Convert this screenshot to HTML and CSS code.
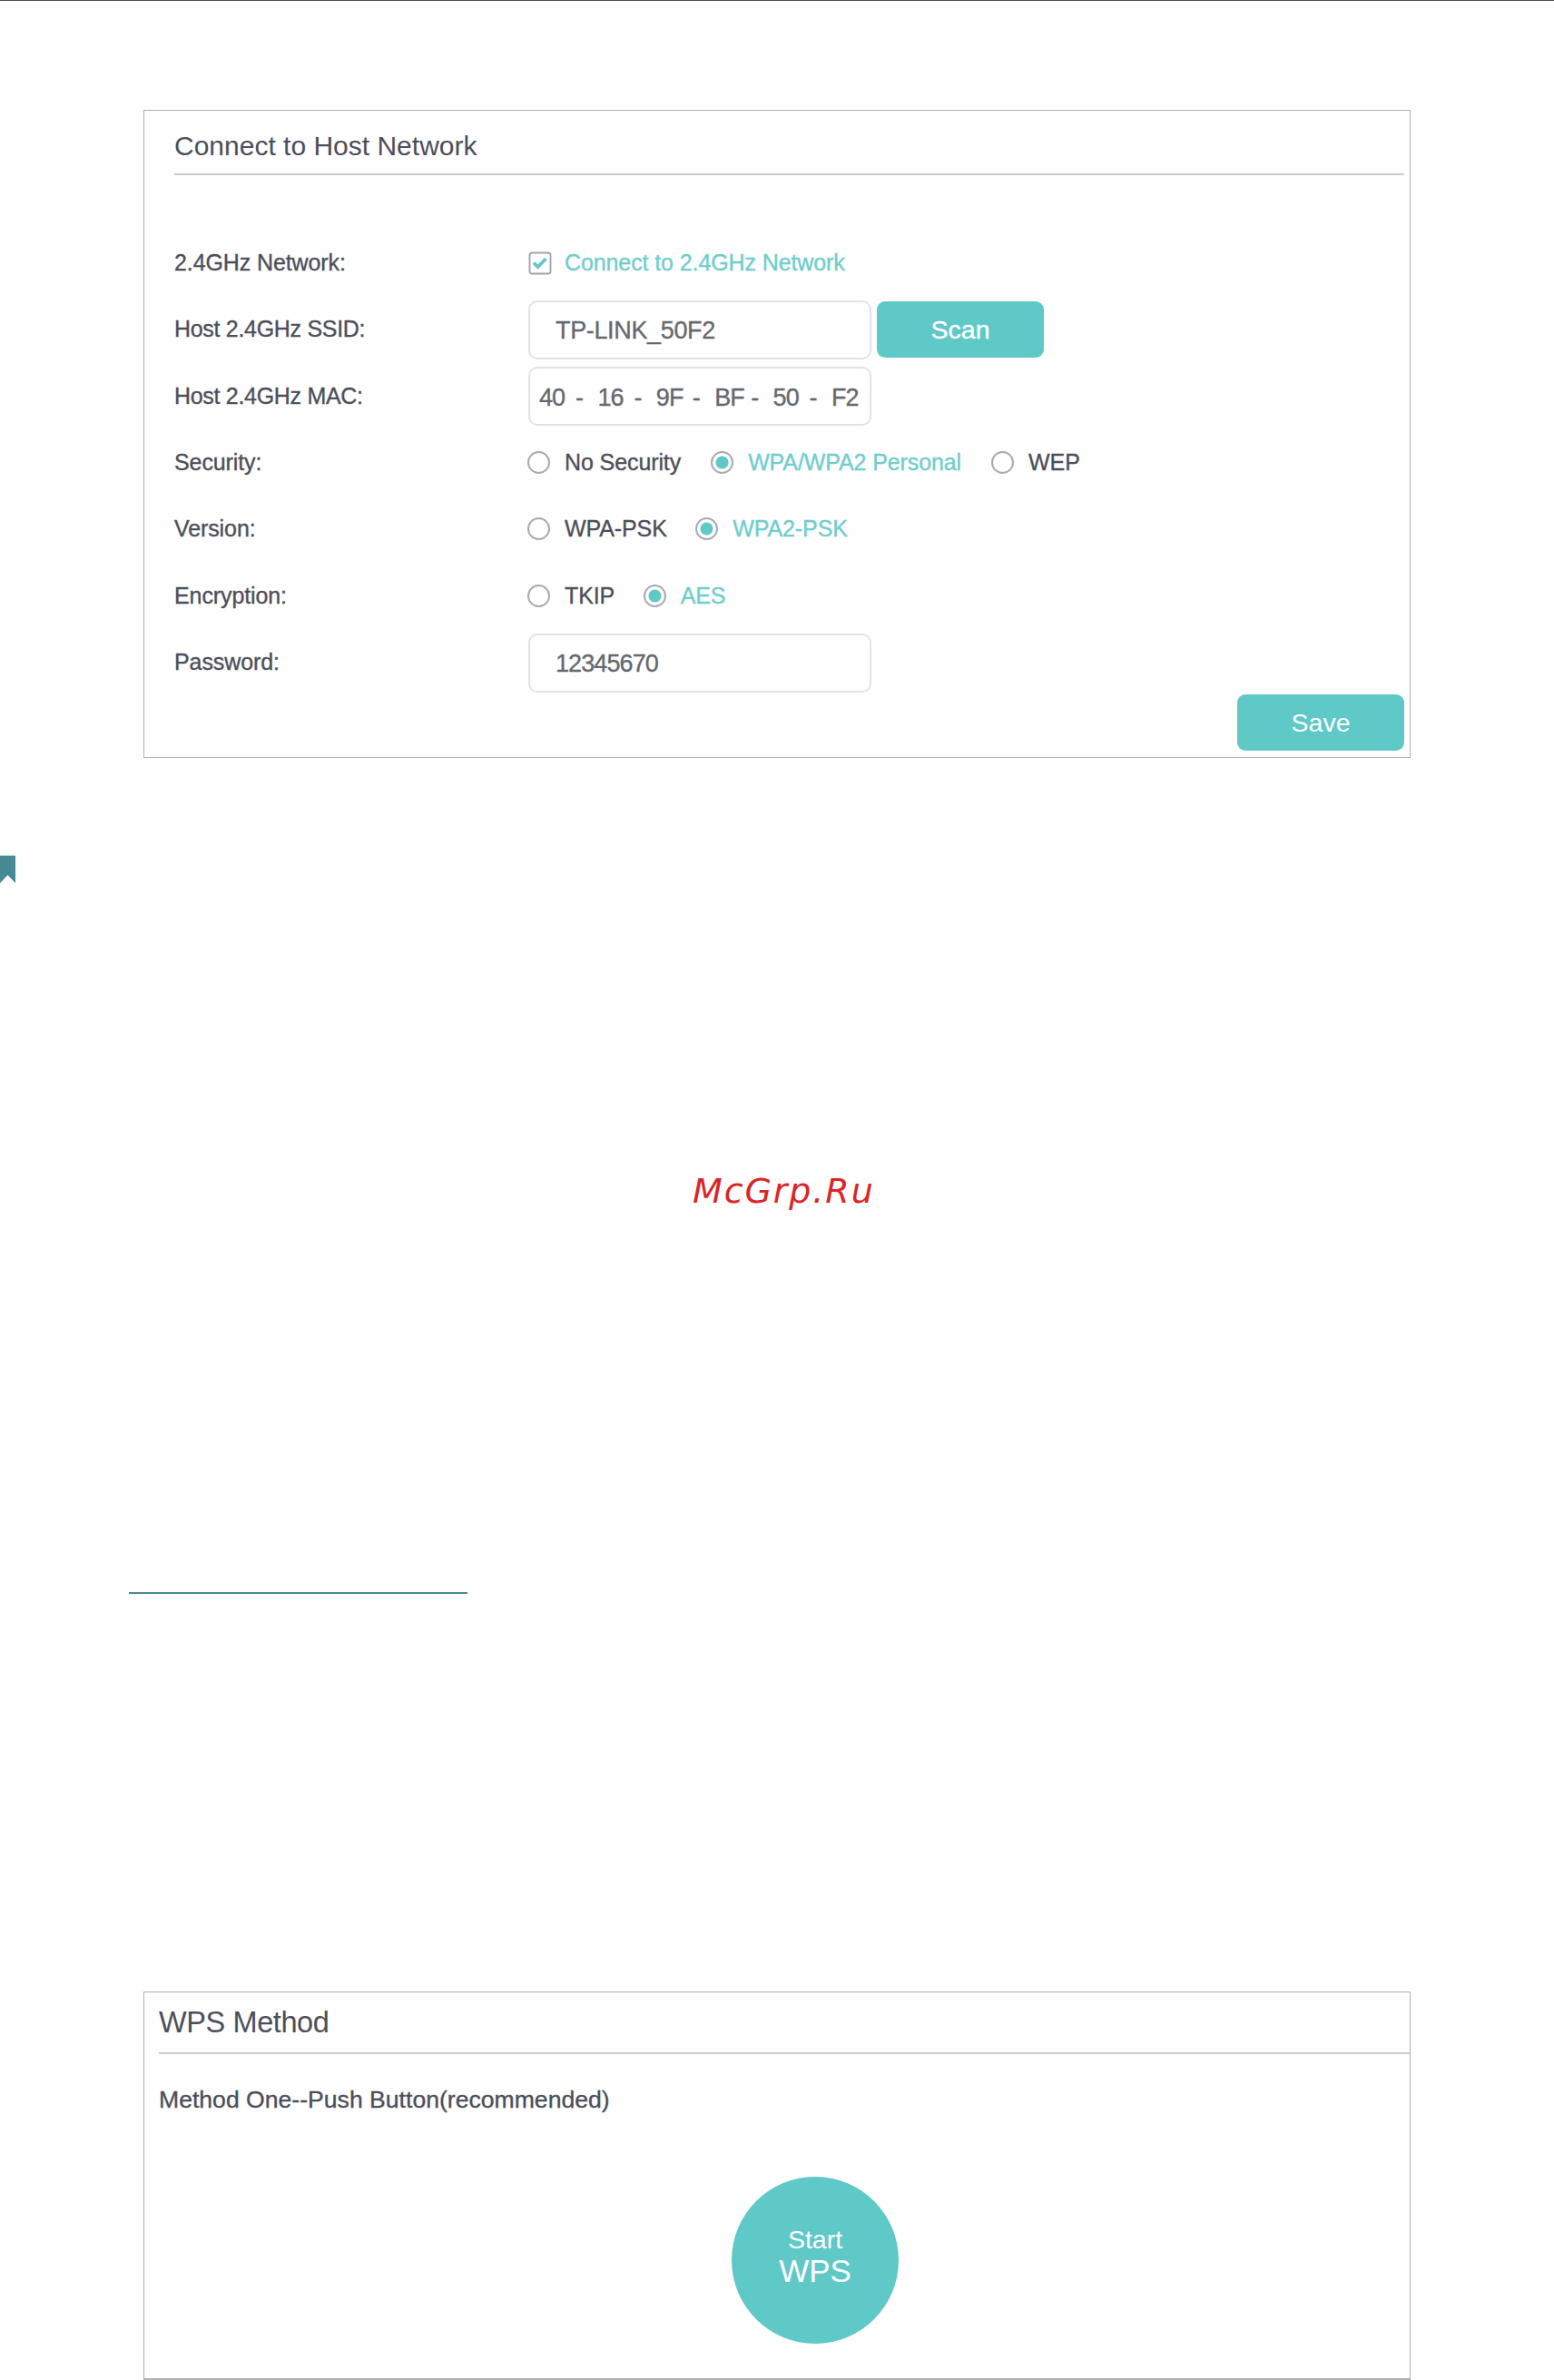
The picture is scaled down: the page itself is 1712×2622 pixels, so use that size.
FILE: index.html
```html
<!DOCTYPE html>
<html lang="en">
<head>
  <meta charset="UTF-8">
  <meta name="viewport" content="width=device-width, initial-scale=1.0">
  <title>Connect to Host Network</title>
  <link rel="stylesheet" href="styles.css">
</head>
<body>

  <!-- Host network form -->
  <div class="panel host-panel">
    <h1>Connect to Host Network</h1>

    <div class="form-row">
      <span class="label">2.4GHz Network:</span>
      <label class="option checked connect">
        <svg class="checkbox" viewBox="0 0 26 26">
          <rect x="1.5" y="1.5" width="23" height="23" rx="2.5" fill="#fff" stroke="#a0a2a8" stroke-width="1.8"/>
          <path d="M6 12.5l4.5 4.5 9-9" fill="none" stroke="#5fc9c8" stroke-width="3.8"/>
        </svg>
        Connect to 2.4GHz Network
      </label>
    </div>

    <div class="form-row">
      <label class="label ssid" for="ssid">Host 2.4GHz SSID:</label>
      <input class="field" type="text" id="ssid" value="TP-LINK_50F2">
      <button class="btn scan">Scan</button>
    </div>

    <div class="form-row">
      <span class="label ssid">Host 2.4GHz MAC:</span>
      <div class="field mac">
        <span>40</span><i>-</i><span>16</span><i>-</i><span>9F</span><i>-</i><span>BF</span><i>-</i><span>50</span><i>-</i><span>F2</span>
      </div>
    </div>

    <div class="form-row">
      <span class="label">Security:</span>
      <label class="option"><input type="radio" name="security">No Security</label>
      <label class="option checked"><input type="radio" name="security" checked>WPA/WPA2 Personal</label>
      <label class="option"><input type="radio" name="security">WEP</label>
    </div>

    <div class="form-row">
      <span class="label">Version:</span>
      <label class="option psk"><input type="radio" name="version">WPA-PSK</label>
      <label class="option checked"><input type="radio" name="version" checked>WPA2-PSK</label>
    </div>

    <div class="form-row">
      <span class="label">Encryption:</span>
      <label class="option psk"><input type="radio" name="encryption">TKIP</label>
      <label class="option checked"><input type="radio" name="encryption" checked>AES</label>
    </div>

    <div class="form-row">
      <label class="label" for="password">Password:</label>
      <input class="field password" type="text" id="password" value="12345670">
    </div>

    <button class="btn save">Save</button>
  </div>

  <svg class="bookmark" viewBox="0 0 17 32">
    <path d="M0 0h17v31l-8.500-9L0 31z" fill="#478a94"/>
    <path d="M0 0h17v1H0z" fill="#b5d0d4"/>
  </svg>

  <div class="watermark">McGrp.Ru</div>

  <div class="link-line"></div>

  <!-- WPS -->
  <div class="panel wps-panel">
    <h2>WPS Method</h2>
    <p>Method One--Push Button(recommended)</p>
    <button class="wps-btn"><span>Start</span>WPS</button>
  </div>

</body>
</html>
```
FILE: styles.css
```css
* {
  box-sizing: border-box;
}
body {
  margin: 0;
  width: 1712px;
  height: 2622px;
  overflow: hidden;
  display: flex;
  flex-direction: column;
  border-top: 1px solid #4d4d4d;
  background-color: #fefefe;
  font-family: "Liberation Sans", Arial, sans-serif;
  font-size: 25px;
  color: #4c4f5a;
}
.panel {
  width: 1396px;
  margin-left: 158px;
  border: 1px solid #b0b0b0;
  background-color: #fefefe;
  flex: none;
}
h1, h2, p {
  margin: 0;
  font-weight: normal;
}
.host-panel {
  height: 714px;
  margin-top: 120px;
  padding: 20px 6px 0 33px;
  display: flex;
  flex-direction: column;
}
.host-panel h1 {
  font-size: 30px;
  line-height: 38px;
  padding-bottom: 11px;
  border-bottom: 2px solid #cbcdcd;
  margin-bottom: 60px;
}
.form-row {
  display: flex;
  align-items: center;
  height: 73.33px;
  flex: none;
  -webkit-text-stroke: 0.35px;
}
.label {
  width: 390px;
  letter-spacing: -0.1px;
}
.ssid {
  letter-spacing: -0.3px;
}
.option {
  display: flex;
  align-items: center;
  margin-right: 34px;
  letter-spacing: -0.1px;
}
.psk {
  margin-right: 32.500px;
}
.checked {
  color: #6fcdcc;
}
.checkbox {
  width: 26px;
  height: 26px;
  margin: 0 14px 0 0;
}
.option input {
  appearance: none;
  width: 25px;
  height: 25px;
  margin: 0 16px 0 -1px;
  border: 2px solid #a8aaaf;
  border-radius: 50%;
  background-color: #fff;
}
.option input:checked {
  background: radial-gradient(circle, #5fc9c8 6.500px, #fff 7.500px);
}
.field {
  width: 378px;
  height: 65px;
  padding: 2px 0 0 28px;
  border: 2px solid #e3e3e3;
  border-radius: 10px;
  background-color: #fff;
  font-family: inherit;
  font-size: 27px;
  letter-spacing: -0.35px;
  color: #66686f;
  -webkit-text-stroke: 0.35px;
  position: relative;
  top: 0.5px;
}
.password {
  letter-spacing: -0.9px;
}
.mac {
  display: flex;
  align-items: center;
  padding: 3px 0 0 10px;
  letter-spacing: -0.9px;
}
.mac span {
  width: 40px;
}
.mac i {
  width: 24.4px;
  font-style: normal;
}
.btn {
  width: 184px;
  height: 62px;
  padding: 1px 0 0;
  border: none;
  border-radius: 9px;
  background-color: #5fc9c8;
  color: #fff;
  font-family: inherit;
  font-size: 28.5px;
}
.scan {
  margin-left: 6px;
}
.save {
  align-self: flex-end;
  margin-top: -1px;
}
.bookmark {
  width: 17px;
  height: 32px;
  margin-top: 107px;
  flex: none;
}
.watermark {
  margin: 314px 0 0 763px;
  font-family: "DejaVu Sans", sans-serif;
  font-style: italic;
  font-size: 38px;
  line-height: 48px;
  letter-spacing: 1.9px;
  color: #d92626;
}
.link-line {
  width: 373px;
  height: 2px;
  margin: 418px 0 0 142px;
  background-color: #478a94;
  flex: none;
}
.wps-panel {
  height: 428px;
  margin-top: 438px;
  padding: 13px 0 0 16px;
  border-bottom-width: 2px;
}
.wps-panel h2 {
  font-size: 32.500px;
  line-height: 40px;
  letter-spacing: -0.4px;
  padding-bottom: 13px;
  border-bottom: 2px solid #cbcbcb;
}
.wps-panel p {
  font-size: 26.600px;
  line-height: 30px;
  margin-top: 35px;
  -webkit-text-stroke: 0.35px;
}
.wps-btn {
  display: flex;
  flex-direction: column;
  align-items: center;
  width: 184px;
  height: 184px;
  margin: 70px 0 0 631px;
  padding: 53px 0 0;
  border: none;
  border-radius: 50%;
  background-color: #5fc9c8;
  color: #fff;
  font-family: inherit;
  font-size: 35px;
  line-height: 38px;
}
.wps-btn span {
  font-size: 28.500px;
  line-height: 32px;
}
```
